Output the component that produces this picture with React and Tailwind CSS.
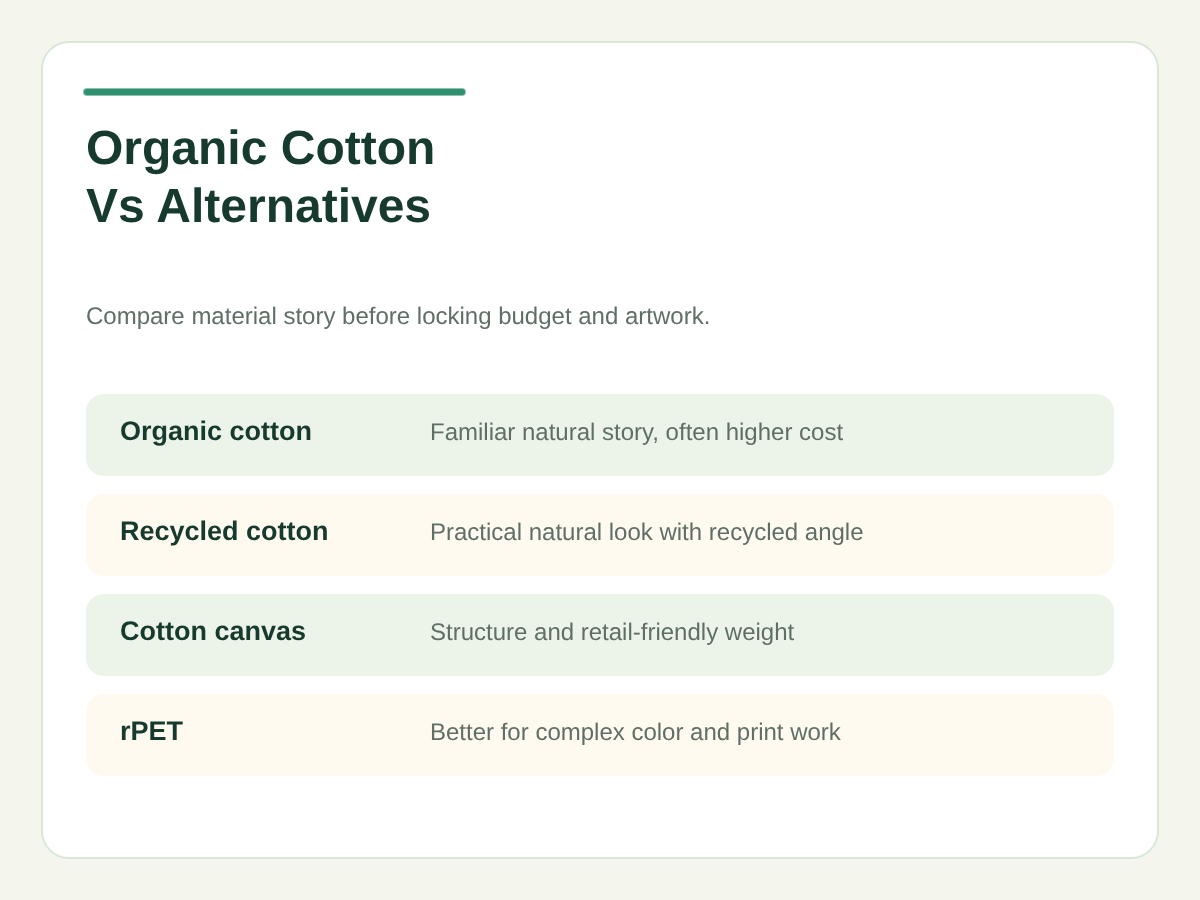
const rows = [
  { name: "Organic cotton", text: "Familiar natural story, often higher cost", bg: "bg-[#ecf4ea]" },
  { name: "Recycled cotton", text: "Practical natural look with recycled angle", bg: "bg-[#fffaf0]" },
  { name: "Cotton canvas", text: "Structure and retail-friendly weight", bg: "bg-[#ecf4ea]" },
  { name: "rPET", text: "Better for complex color and print work", bg: "bg-[#fffaf0]" },
];

export default function App() {
  return (
    <div className="w-[1200px] h-[900px] bg-[#f4f6ee] p-[41px] font-['Liberation_Sans',Arial,sans-serif] [text-rendering:geometricPrecision]">
      <div className="w-[1118px] h-[818px] bg-white border-2 border-[#d9e7d8] rounded-[28px] pt-[46px] pl-[41px] pr-[43px]">
        <div className="w-[381px] h-[6px] rounded-[4px] bg-[#2f8f6f] shadow-[0_0_0_1px_rgba(47,143,111,0.55)]" />
        <h1 className="mt-[25px] ml-[2px] text-[48px] leading-[58px] font-bold text-[#173a2e] [will-change:opacity]">
          Organic Cotton
          <br />
          Vs Alternatives
        </h1>
        <p className="mt-[65px] ml-[2px] text-[24px] leading-[32px] text-[#5f6f66] [will-change:opacity]">
          Compare material story before locking budget and artwork.
        </p>
        <div className="mt-[61px] ml-[2px] flex flex-col gap-[18px]">
          {rows.map((r) => (
            <div key={r.name} className={`h-[82px] rounded-[18px] flex items-start pl-[34px] ${r.bg}`}>
              <div className="w-[310px] mt-[21px] text-[27px] leading-[32px] font-bold text-[#173a2e] [will-change:opacity]">{r.name}</div>
              <div className="mt-[23px] text-[24px] leading-[32px] text-[#5f6f66] [will-change:opacity]">{r.text}</div>
            </div>
          ))}
        </div>
      </div>
    </div>
  );
}
